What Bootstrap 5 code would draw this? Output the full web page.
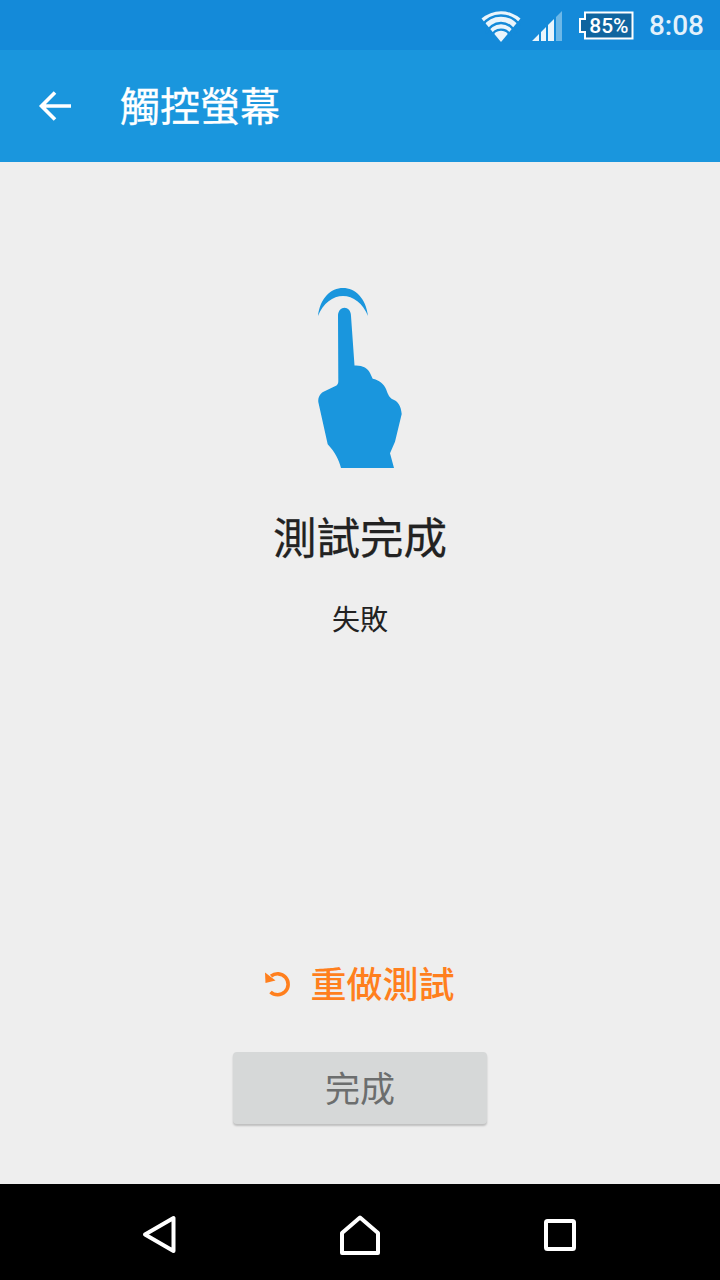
<!DOCTYPE html>
<html lang="zh-Hant">
<head>
  <meta charset="UTF-8">
  <meta name="viewport" content="width=device-width, initial-scale=1.0">
  <title>觸控螢幕</title>
  <link href="https://cdn.jsdelivr.net/npm/bootstrap@5.3.0/dist/css/bootstrap.min.css" rel="stylesheet">
  <style>
    body { font-family: Roboto, "Noto Sans CJK TC", sans-serif; background: #eeeeee; }
    .screen { height: 1280px; overflow: hidden; }
    .status-bar { height: 50px; background: #148ad9; color: #e3f1fb; padding-right: 16px; padding-top: 2px; }
    .wifi-icon { margin-right: 11px; }
    .status-time { font-size: 28px; font-weight: 500; line-height: 1; margin-left: 15px; }
    .battery { margin-left: 16px; position: relative; width: 56px; height: 30px; }
    .battery-text { position: absolute; left: 6px; right: 0; top: 3px; text-align: center; color: #fff; font-size: 21px; font-weight: 500; line-height: 24px; }
    .app-bar { height: 112px; background: #1a96dd; color: #fff; padding-left: 38px; }
    .app-title { font-size: 40px; line-height: 1; margin: 4px 0 0 46px; font-weight: 400; -webkit-text-stroke: .3px #fff; }
    .content { background: #eeeeee; }
    .hand-icon { margin-top: 122px; display: block; }
    .done-title { font-size: 43.5px; line-height: 1; color: #222; margin: 50px 0 0; font-weight: 400; -webkit-text-stroke: .25px #222; }
    .done-result { font-size: 28px; line-height: 1; color: #222; margin: 45px 0 0; }
    .retry-row { color: #ff7f1d; font-size: 36px; line-height: 1; gap: 18px; margin-bottom: 48px; margin-right: 1px; font-weight: 500; }
    .retry-icon { margin-bottom: 5px; }
    .finish-btn { width: 254px; height: 72px; margin-bottom: 60px; padding: 4px 0 0; background: #d6d8d8; border: 0; border-radius: 4px; box-shadow: 0 2px 2px rgba(0,0,0,.2); color: #6c6e6e; font-size: 35px; line-height: 1; }
    .nav-bar { height: 96px; background: #000; padding-top: 5px; }
    .nav-slot { width: 200px; }
  </style>
</head>
<body>
  <div class="screen d-flex flex-column">
    <div class="status-bar d-flex align-items-center justify-content-end">
      <svg class="wifi-icon" width="40" height="32" viewBox="0 0 40 32">
        <path d="M20 32 L0.5 8.5 A30 30 0 0 1 39.5 8.5 Z" fill="#eaf5fc"/>
        <path d="M1 15.5 A23 23 0 0 1 39 15.5 M5 23.5 A16 16 0 0 1 35 23.5 M10.5 26.5 A10 10 0 0 1 29.5 26.5" fill="none" stroke="#148ad9" stroke-width="2.4"/>
      </svg>
      <svg width="30" height="30" viewBox="0 0 30 30">
        <path d="M0 30 L7 23 V30 Z M9 21 L14 16 V30 H9 Z" fill="#eaf5fc"/>
        <path d="M16 14 L22 8 V30 H16 Z" fill="#eaf5fc"/>
        <path d="M24 6 L30 0 V30 H24 Z" fill="#6db8e8"/>
      </svg>
      <div class="battery">
        <svg width="56" height="30" viewBox="0 0 56 30">
          <path d="M7 1.5 H54.5 V27.5 H7 V21 H2 V8 H7 Z" fill="#0f659f" stroke="#fff" stroke-width="2"/>
        </svg>
        <div class="battery-text">85%</div>
      </div>
      <span class="status-time">8:08</span>
    </div>

    <div class="app-bar d-flex align-items-center">
      <svg width="36" height="34" viewBox="0 0 36 34">
        <path d="M33 17 H4 M17 3.5 L3.5 17 L17 30.5" fill="none" stroke="#fff" stroke-width="3.6"/>
      </svg>
      <h1 class="app-title">觸控螢幕</h1>
    </div>

    <div class="content flex-grow-1 d-flex flex-column align-items-center">
      <svg class="hand-icon" width="100" height="184" viewBox="310 284 100 184">
        <path d="M318 316 C320 298 331 288 343 288 C355 288 366 298 368 316 C363 303 353 296 343 296 C333 296 323 303 318 316 Z" fill="#1a96dd"/>
        <path d="M338 316 C338 305 351 305 351 316 L354.5 365.5 C362 365 368 368 370 373 L372.7 378.7 C379 380 384 384 386 389 C388 395 390 398 392 399 C398 401 401 406 401.7 414 L395 441.7 L390 453.3 L394 468 H341 C339 460 335 452 327.7 444.3 L318.3 402 C318 397 320 394 323 392 L336.5 385.5 C338 384 338.3 383 338.3 381 Z" fill="#1a96dd"/>
      </svg>
      <h2 class="done-title">測試完成</h2>
      <p class="done-result">失敗</p>
      <div class="mt-auto retry-row d-flex align-items-center">
        <svg class="retry-icon" width="28" height="28" viewBox="0 0 28 28">
          <path d="M7 6.2 A10.5 10.5 0 1 1 6.5 22" fill="none" stroke="#ff7f1d" stroke-width="3.6"/>
          <path d="M1 2.5 L1.5 13 L11.5 10.5 Z" fill="#ff7f1d"/>
        </svg>
        <span>重做測試</span>
      </div>
      <button type="button" class="btn finish-btn">完成</button>
    </div>

    <div class="nav-bar d-flex align-items-center justify-content-center">
      <div class="nav-slot d-flex justify-content-center">
        <svg width="36" height="40" viewBox="0 0 36 40">
          <path d="M31.5 3 V36 L3 19.5 Z" fill="none" stroke="#fff" stroke-width="4" stroke-linejoin="round"/>
        </svg>
      </div>
      <div class="nav-slot d-flex justify-content-center">
        <svg width="40" height="40" viewBox="0 0 40 40">
          <path d="M2 18 L20 2.5 L38 18 V38 H2 Z" fill="none" stroke="#fff" stroke-width="4" stroke-linejoin="round"/>
        </svg>
      </div>
      <div class="nav-slot d-flex justify-content-center">
        <svg width="32" height="32" viewBox="0 0 32 32">
          <rect x="2" y="2" width="28" height="28" rx="1.5" fill="none" stroke="#fff" stroke-width="4"/>
        </svg>
      </div>
    </div>
  </div>
  <script src="https://cdn.jsdelivr.net/npm/bootstrap@5.3.0/dist/js/bootstrap.bundle.min.js"></script>
</body>
</html>
